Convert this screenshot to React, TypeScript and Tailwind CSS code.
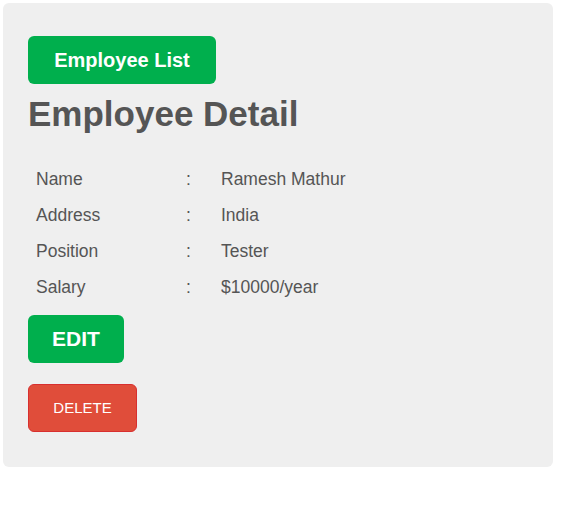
export default function App() {
  const rows = [
    ["Name", "Ramesh Mathur"],
    ["Address", "India"],
    ["Position", "Tester"],
    ["Salary", "$10000/year"],
  ];
  return (
    <div className="w-[572px] h-[507px] bg-white p-[3px]" style={{ fontFamily: '"Liberation Sans", Arial, sans-serif' }}>
      <div className="w-[550px] h-[464px] bg-[#efefef] rounded-[6px] pl-[25px] pt-[33px]">
        <button className="w-[188px] h-[48px] bg-[#00af4d] text-white font-bold text-[20px] rounded-[6px] flex items-center justify-center">
          Employee List
        </button>
        <h1 className="text-[35px] font-bold text-[#555555] leading-[41px] mt-[9px]">Employee Detail</h1>
        <div className="mt-[27px] flex flex-col text-[17.5px] text-[#555555]">
          {rows.map(([k, v]) => (
            <div key={k} className="flex h-[36px] items-center">
              <span className="w-[150px] pl-[8px] shrink-0">{k}</span>
              <span className="w-[43px] shrink-0 pl-[8px]">:</span>
              <span>{v}</span>
            </div>
          ))}
        </div>
        <button className="mt-[10px] w-[96px] h-[48px] bg-[#00af4d] text-white font-bold text-[21px] rounded-[6px] flex items-center justify-center">
          EDIT
        </button>
        <button className="mt-[21px] w-[109px] h-[48px] bg-[#e04d3a] border border-[#d82f2f] text-white text-[15px] rounded-[6px] flex items-center justify-center">
          DELETE
        </button>
      </div>
    </div>
  );
}
